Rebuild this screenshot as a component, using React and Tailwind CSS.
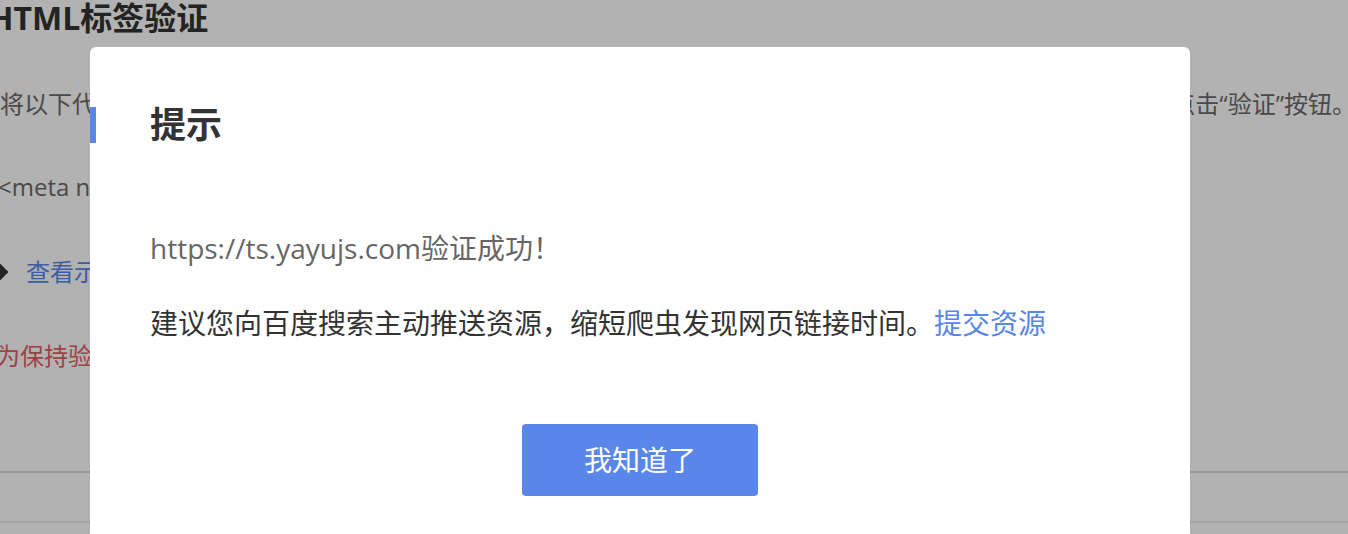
import React from "react";

const FONT = { fontFamily: '"Open Sans", "Noto Sans CJK SC", sans-serif' };

export default function App() {
  return (
    <div className="relative w-[1348px] h-[534px] overflow-hidden bg-white" style={FONT}>
      {/* underlying page */}
      <div className="ml-[-4px]">
        <h1 className="ml-[-7px] mt-[-2px] text-[32px] leading-[40px] font-bold text-[#333]">HTML标签验证</h1>
        <div className="mt-12 mr-[-8px] flex justify-between whitespace-nowrap text-[24px] leading-[36px] text-[#6a6a6a]">
          <span className="ml-[4px]">将以下代码添加到您网站首页HTML代码的&lt;head&gt;标签与&lt;/head&gt;标签之间，</span>
          <span>完成操作后请点击“验证”按钮。</span>
        </div>
        <div className="mt-[47px] whitespace-nowrap text-[24px] leading-[36px] text-[#6a6a6a]">
          <span className="ml-[2px]">&lt;meta name="baidu-site-verification" content="code-xxxx" /&gt;</span>
        </div>
        <div className="mt-[49px] flex items-center gap-[20px] whitespace-nowrap text-[24px] leading-[36px] text-[#5a86ea]">
          <span className="ml-[-2px] inline-block w-[12px] h-[12px] rotate-45 bg-[#333]"></span>
          <span>查看示例</span>
        </div>
        <div className="mt-12 whitespace-nowrap text-[24px] leading-[36px] text-[#e06060]">
          为保持验证通过的状态，成功验证后请不要删除该标签
        </div>
        <div className="mt-[97px] h-[2px] bg-[#d9d9d9]"></div>
        <div className="mt-[48px] h-[2px] bg-[#ececec]"></div>
      </div>

      {/* overlay */}
      <div className="absolute inset-0 bg-black/30"></div>

      {/* modal */}
      <div className="absolute left-[90px] top-[47px] w-[1100px] h-[560px] rounded-[6px] bg-white">
        <div className="mt-[60px] flex items-center h-[36px]">
          <div className="w-[6px] h-[36px] bg-[#5a86ea]"></div>
          <div className="ml-[54px] text-[36px] leading-[36px] font-bold text-[#333]">提示</div>
        </div>
        <div className="mt-[84px] px-[60px]">
          <p className="text-[28px] leading-[40px] text-[#666]">https://ts.yayujs.com验证成功<span style={{ fontFamily: '"Noto Sans CJK SC", sans-serif' }}>！</span></p>
          <p className="mt-[35px] text-[28px] leading-[40px] text-[#333]">
            建议您向百度搜索主动推送资源，缩短爬虫发现网页链接时间。<span className="text-[#5a86ea]">提交资源</span>
          </p>
        </div>
        <div className="mt-[81px] flex justify-center">
          <button className="w-[236px] h-[72px] rounded-[4px] bg-[#5a86ea] text-white text-[28px] leading-[72px]">我知道了</button>
        </div>
      </div>
    </div>
  );
}
